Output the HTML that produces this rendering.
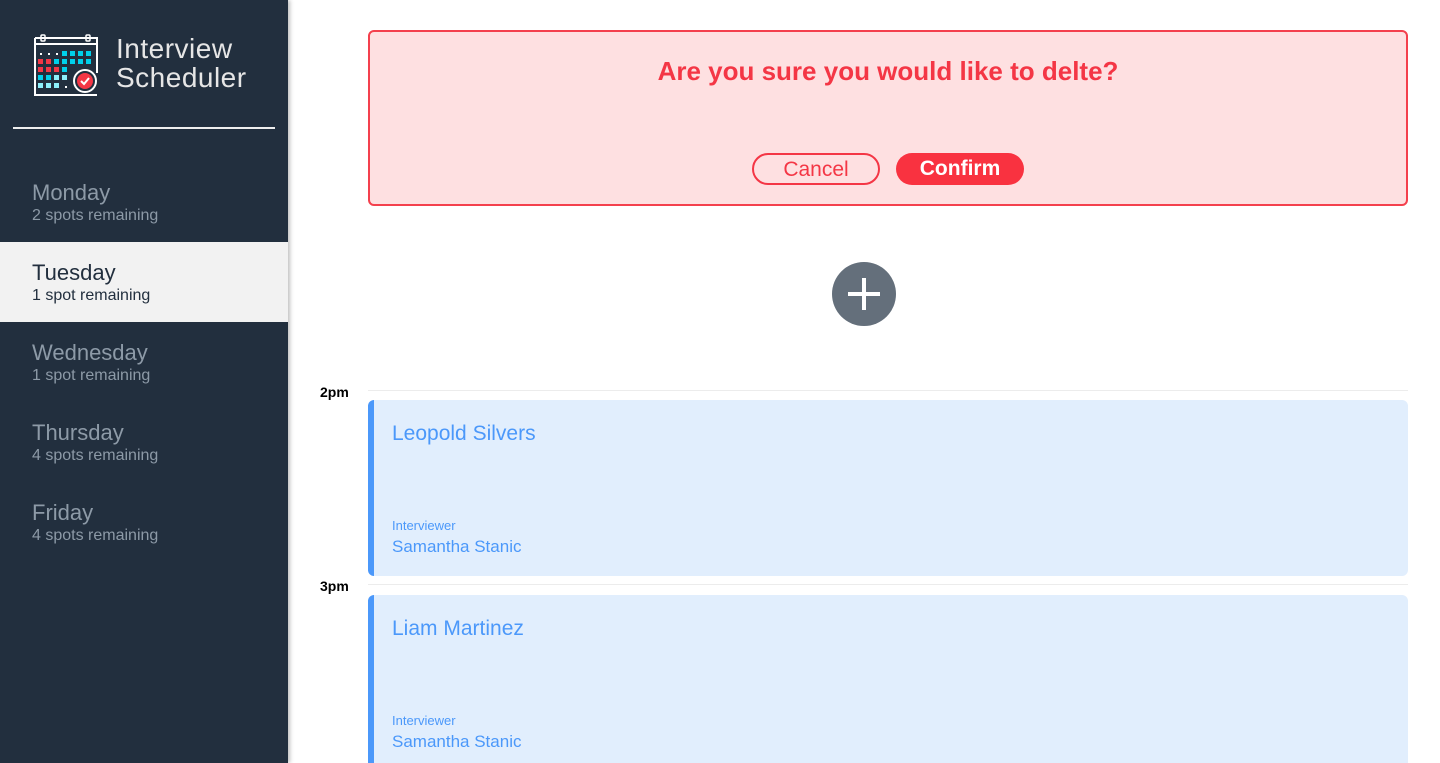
<!DOCTYPE html>
<html><head><meta charset="utf-8"><style>
*{margin:0;padding:0;box-sizing:border-box}
html,body{width:1440px;height:763px;overflow:hidden}
body{font-family:"Liberation Sans",sans-serif;background:#fff;position:relative}
.side{position:absolute;left:0;top:0;width:288px;height:763px;background:#222f3e;box-shadow:2px 0 4px rgba(0,0,0,.25)}
.brand{position:absolute;left:116px;top:34px;color:#e6e6e6;font-size:28px;font-weight:normal;line-height:29px;letter-spacing:.5px}
.hr{position:absolute;left:13px;top:127px;width:262px;height:2px;background:#eee}
.day{position:absolute;left:0;width:288px;height:80px;padding:19px 0 0 32px;color:#8d9aa7}
.day .n{font-size:22px;line-height:24px}
.day .s{font-size:16px;line-height:22px}
.day.sel{background:#f2f2f2;color:#222f3e}
.alert{position:absolute;left:368px;top:30px;width:1040px;height:176px;background:#fee0e1;border:2px solid #f4404d;border-radius:6px}
.alert h1{text-align:center;color:#f43645;font-size:26px;font-weight:bold;margin-top:24px}
.btn{position:absolute;top:121px;width:128px;height:32px;border-radius:16px;font-size:21px;text-align:center;line-height:29px}
.cancel{left:382px;border:2px solid #f43645;color:#f43645;background:#fee0e1}
.confirm{left:526px;background:#f93240;color:#fff;font-weight:bold;line-height:32px}
.plus{position:absolute;left:832px;top:262px;width:64px;height:64px;border-radius:50%;background:#646f7b}
.plus:before{content:"";position:absolute;left:16px;top:30px;width:32px;height:4px;background:#fff}
.plus:after{content:"";position:absolute;left:30px;top:16px;width:4px;height:32px;background:#fff}
.line{position:absolute;left:368px;width:1040px;height:1px;background:#ececec}
.time{position:absolute;left:320px;font-size:14px;font-weight:bold;color:#000}
.card{position:absolute;left:368px;width:1040px;height:176px;background:#e1eefd;border-left:6px solid #4b98fa;border-radius:6px;color:#4b98fa;padding-left:18px}
.card .nm{font-size:21px;position:absolute;top:22px}
.card .iv{font-size:13px;position:absolute;top:118px}
.card .in{font-size:17px;position:absolute;top:137px}
</style></head><body>
<div class="side">
<svg style="position:absolute;left:30px;top:32px" width="72" height="68" viewBox="30 32 72 68">
<path d="M35 38 H97 V73 M97 95 H35 V38 M35 44 H97" stroke="#fff" stroke-width="2" fill="none"/>
<rect x="41" y="35" width="4" height="6" rx="1" fill="none" stroke="#fff" stroke-width="1.5"/>
<rect x="86" y="35" width="4" height="6" rx="1" fill="none" stroke="#fff" stroke-width="1.5"/>
<g fill="#fff"><rect x="40" y="53" width="2" height="2"/><rect x="48" y="53" width="2" height="2"/><rect x="56" y="53" width="2" height="2"/><rect x="65" y="86" width="2" height="2"/></g>
<g fill="#00d0eb"><rect x="62" y="51" width="5" height="5"/><rect x="70" y="51" width="5" height="5"/><rect x="78" y="51" width="5" height="5"/><rect x="86" y="51" width="5" height="5"/>
<rect x="54" y="59" width="5" height="5"/><rect x="62" y="59" width="5" height="5"/><rect x="70" y="59" width="5" height="5"/><rect x="78" y="59" width="5" height="5"/><rect x="86" y="59" width="5" height="5"/>
<rect x="62" y="67" width="5" height="5"/><rect x="38" y="75" width="5" height="5"/><rect x="46" y="75" width="5" height="5"/></g>
<g fill="#f43645"><rect x="38" y="59" width="5" height="5"/><rect x="46" y="59" width="5" height="5"/><rect x="38" y="67" width="5" height="5"/><rect x="46" y="67" width="5" height="5"/><rect x="54" y="67" width="5" height="5"/></g>
<g fill="#8ef0fb"><rect x="54" y="75" width="5" height="5"/><rect x="62" y="75" width="5" height="5"/><rect x="38" y="83" width="5" height="5"/><rect x="46" y="83" width="5" height="5"/><rect x="54" y="83" width="5" height="5"/></g>
<circle cx="85" cy="81" r="11" fill="#222f3e" stroke="#fff" stroke-width="2"/>
<circle cx="85" cy="81" r="8" fill="#f43645"/>
<path d="M81 81 L84 84 L89 78" stroke="#fff" stroke-width="2" fill="none"/>
</svg>
<div class="brand">Interview<br>Scheduler</div>
<div class="hr"></div>
<div class="day" style="top:162px"><div class="n">Monday</div><div class="s">2 spots remaining</div></div>
<div class="day sel" style="top:242px"><div class="n">Tuesday</div><div class="s">1 spot remaining</div></div>
<div class="day" style="top:322px"><div class="n">Wednesday</div><div class="s">1 spot remaining</div></div>
<div class="day" style="top:402px"><div class="n">Thursday</div><div class="s">4 spots remaining</div></div>
<div class="day" style="top:482px"><div class="n">Friday</div><div class="s">4 spots remaining</div></div>
</div>
<div class="alert"><h1>Are you sure you would like to delte?</h1>
<div class="btn cancel">Cancel</div><div class="btn confirm">Confirm</div></div>
<div class="plus"></div>
<div class="line" style="top:390px"></div><div class="time" style="top:384px">2pm</div>
<div class="card" style="top:400px"><div class="nm">Leopold Silvers</div><div class="iv">Interviewer</div><div class="in">Samantha Stanic</div></div>
<div class="line" style="top:584px"></div><div class="time" style="top:578px">3pm</div>
<div class="card" style="top:595px"><div class="nm">Liam Martinez</div><div class="iv">Interviewer</div><div class="in">Samantha Stanic</div></div>
</body></html>
